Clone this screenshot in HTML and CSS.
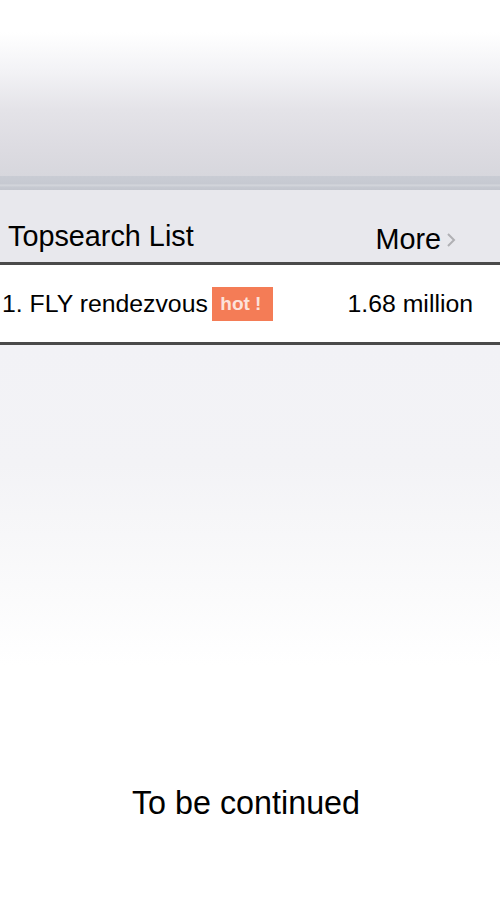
FILE: index.html
```html
<!DOCTYPE html>
<html>
<head>
<meta charset="utf-8">
<link rel="stylesheet" href="styles.css">
</head>
<body>
<div class="page">
  <div class="top"></div>
  <div class="band"></div>
  <div class="head">
    <span class="title">Topsearch List</span>
    <span class="more">More<svg class="chev" width="12" height="16" viewBox="0 0 12 16"><path d="M3 2 L9 8 L3 14" fill="none" stroke="#b0b0b4" stroke-width="2"/></svg></span>
  </div>
  <div class="row">
    <span class="name">1. FLY rendezvous<span class="hot">hot !</span></span>
    <span class="count">1.68 million</span>
  </div>
  <div class="rest">
    <div class="tbc">To be continued</div>
  </div>
</div>
</body>
</html>
```
FILE: styles.css
```css
html, body {
  margin: 0;
  padding: 0;
  background: #fff;
}
.page {
  width: 500px;
  height: 901px;
  display: flex;
  flex-direction: column;
  font-family: "Liberation Sans", Arial, sans-serif;
  color: #000;
}
.top {
  height: 176px;
  background: linear-gradient(to bottom, #ffffff 0px, #ffffff 32px, #f3f3f6 70px, #e4e3e8 110px, #dcdbe1 150px, #d7d7dd 176px);
}
.band {
  height: 14px;
  background: linear-gradient(to bottom, #c9ccd4 0px, #c6c9d1 8px, #d5d7dd 9px, #c7cad2 11px, #c3c6ce 14px);
}
.head {
  height: 75px;
  background: #e8e8ed;
  display: flex;
  align-items: flex-end;
  justify-content: space-between;
  padding: 0 43px 9px 8px;
  box-sizing: border-box;
  border-bottom: 3px solid #4a4a4a;
}
.title {
  font-size: 28.8px;
  line-height: 28px;
  position: relative;
  top: -3px;
}
.more {
  font-size: 28.8px;
  line-height: 28px;
  display: flex;
  align-items: center;
}
.chev {
  margin-left: 4px;
  margin-top: 2px;
}
.row {
  height: 77px;
  background: #fff;
  border-bottom: 3px solid #4a4a4a;
  display: flex;
  align-items: center;
  justify-content: space-between;
  padding: 0 27px 0 2px;
  font-size: 24.8px;
}
.name {
  display: flex;
  align-items: center;
}
.hot {
  display: inline-block;
  background: #f47c56;
  color: rgba(255, 255, 255, 0.8);
  font-size: 19px;
  font-weight: bold;
  height: 34px;
  line-height: 34px;
  width: 61px;
  text-align: center;
  margin-left: 4px;
  margin-top: 0;
  box-sizing: border-box;
  padding-right: 3px;
}
.rest {
  flex: 1;
  background: linear-gradient(to bottom, #f2f2f6 0px, #f3f3f6 120px, #fafafb 240px, #ffffff 320px);
  display: flex;
  flex-direction: column;
  justify-content: flex-end;
  align-items: center;
  padding: 0 8px 82px 0;
}
.tbc {
  font-size: 32.3px;
  line-height: 32px;
}
```
